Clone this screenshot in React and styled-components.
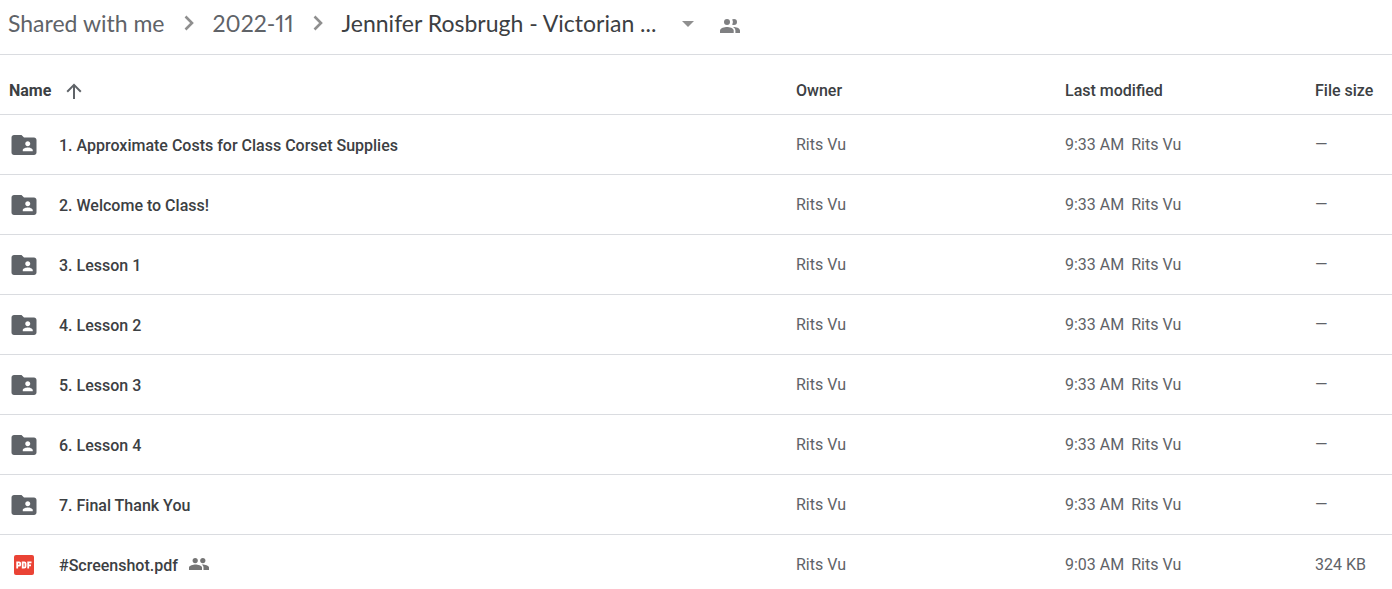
import React, { useState } from "react";
import styled, { createGlobalStyle } from "styled-components";

const GlobalStyle = createGlobalStyle`
  * {
    box-sizing: border-box;
  }
  body {
    margin: 0;
    overflow: hidden;
    background: #fff;
    color: #3c4043;
    font-family: Roboto, "Liberation Sans", sans-serif;
    font-size: 16px;
    line-height: 20px;
  }
  button {
    display: inline-flex;
    align-items: center;
    padding: 0;
    border: 0;
    background: none;
    color: inherit;
    font: inherit;
    cursor: pointer;
  }
`;

const Breadcrumbs = styled.nav`
  display: flex;
  align-items: center;
  height: 55px;
  padding: 0 8px 8px;
  border-bottom: 1px solid #dadce0;
  font-family: Lato, "Liberation Sans", sans-serif;
  font-size: 23px;
  font-variant-numeric: proportional-nums;
  line-height: 28px;
  white-space: nowrap;
`;

const Crumb = styled.a`
  color: ${(props) => (props.$current ? "#3c4043" : "#5f6368")};
  text-decoration: none;
`;

const Chevron = styled.svg`
  width: 24px;
  height: 24px;
  margin: 0 12px;
  fill: none;
  stroke: #8f8f8f;
  stroke-width: 2.6;
`;

const MenuButton = styled.button`
  margin: 0 20px;
`;

const PeopleButton = styled.button`
  padding-top: 6px;
`;

const Icon = styled.svg`
  display: block;
  width: ${(props) => props.$size}px;
  height: ${(props) => props.$height || props.$size}px;
  fill: ${(props) => props.$color || "#5f6368"};
`;

const FileTable = styled.table`
  width: 100%;
  table-layout: fixed;
  border-collapse: separate;
  border-spacing: 0;
`;

const Column = styled.col`
  width: ${(props) => props.$width};
`;

const HeadCell = styled.th`
  height: 60px;
  padding: 12px 0 0;
  border-bottom: 1px solid #dadce0;
  color: #3c4043;
  font-weight: ${(props) => (props.$sorted ? 700 : 500)};
  text-align: left;
`;

const SortButton = styled.button`
  gap: 11px;
  padding-left: 9px;
`;

const Cell = styled.td`
  height: 60px;
  padding: 0;
  border-bottom: 1px solid #dadce0;
  color: #5f6368;
  white-space: nowrap;
`;

const FileRow = styled.div`
  display: flex;
  align-items: center;
  height: 31px;
  padding: 1px 0 0 9px;
  color: #3c4043;
  font-weight: 500;
`;

const FileName = styled.span`
  padding-top: 2px;
`;

const FileIcon = styled.span`
  display: flex;
  justify-content: center;
  width: 30px;
  margin-right: 20px;
`;

const SharedMark = styled.span`
  margin-left: 11px;
  padding-bottom: 2px;
`;

const Editor = styled.span`
  margin-left: 7px;
`;

const PdfBadge = styled.span`
  display: flex;
  align-items: center;
  justify-content: center;
  width: 20px;
  height: 20px;
  border-radius: 2px;
  background: #ea4335;
`;

const files = [
  { name: "1. Approximate Costs for Class Corset Supplies", time: "9:33 AM" },
  { name: "2. Welcome to Class!", time: "9:33 AM" },
  { name: "3. Lesson 1", time: "9:33 AM" },
  { name: "4. Lesson 2", time: "9:33 AM" },
  { name: "5. Lesson 3", time: "9:33 AM" },
  { name: "6. Lesson 4", time: "9:33 AM" },
  { name: "7. Final Thank You", time: "9:33 AM" },
  { name: "#Screenshot.pdf", time: "9:03 AM", size: "324 KB", pdf: true },
];

const Separator = () => (
  <Chevron viewBox="0 0 24 24" aria-hidden="true">
    <path d="M8.5 5.5l6.5 6.5-6.5 6.5" />
  </Chevron>
);

const PeopleIcon = () => (
  <Icon viewBox="0 0 20 14" $size={20} $height={14} $color="#7f8082">
    <circle cx="7" cy="3" r="3" />
    <path d="M14 0a3 3 0 0 1 0 6c-.7 0-1.4-.2-1.9-.6.5-.7.8-1.5.8-2.4s-.3-1.7-.8-2.4C12.6.2 13.3 0 14 0z" />
    <path d="M7 8c-2.3 0-7 1.1-7 3.5V14h13.7v-2.5C13.7 9.1 9.3 8 7 8z" />
    <path d="M13 8c1.5.8 2.4 2 2.4 3.5V14H20v-2.5c0-2.4-4-3.5-7-3.5z" />
  </Icon>
);

const SharedIcon = () => (
  <Icon viewBox="0 0 20 12" $size={20} $height={12} $color="#757575">
    <circle cx="6.2" cy="2.6" r="2.6" />
    <circle cx="13.8" cy="2.6" r="2.6" />
    <path d="M6.5 6.5C4.3 6.5 0 7.5 0 9.6V12h13V9.6c0-2.1-4.3-3.1-6.5-3.1z" />
    <path d="M13.5 6.5l-.9.1c1.1.7 1.9 1.7 1.9 3V12H20V9.6c0-2.1-4.3-3.1-6.5-3.1z" />
  </Icon>
);

const FolderIcon = () => (
  <Icon viewBox="0 0 24 24" $size={30} aria-hidden="true">
    <path d="M20 6h-8l-2-2H4c-1.1 0-1.99.9-1.99 2L2 18c0 1.1.9 2 2 2h16c1.1 0 2-.9 2-2V8c0-1.1-.9-2-2-2zm-5 3c1.1 0 2 .9 2 2s-.9 2-2 2-2-.9-2-2 .9-2 2-2zm4 8h-8v-1c0-1.33 2.67-2 4-2s4 .67 4 2v1z" />
  </Icon>
);

const PdfIcon = () => (
  <PdfBadge>
    <svg width="16" height="8" viewBox="0 0 16 8" aria-hidden="true">
      <g fill="none" stroke="#fff" strokeWidth="1.8">
        <path d="M1.2 7.5V1.3h2a1 1 0 0 1 1 1v1.4a1 1 0 0 1-1 1h-2" />
        <path d="M6.7 1.3h1.6a1.2 1.2 0 0 1 1.2 1.2v3a1.2 1.2 0 0 1-1.2 1.2H6.7z" />
        <path d="M12.2 7.5V1.3h3.3M12.2 4.3h2.8" />
      </g>
    </svg>
  </PdfBadge>
);

const App = () => {
  const [ascending, setAscending] = useState(true);
  const rows = ascending ? files : [...files].reverse();

  return (
    <>
      <GlobalStyle />
      <Breadcrumbs aria-label="Folder path">
        <Crumb href="#shared">Shared with me</Crumb>
        <Separator />
        <Crumb href="#2022-11">2022-11</Crumb>
        <Separator />
        <Crumb href="#folder" $current>
          Jennifer Rosbrugh - Victorian ...
        </Crumb>
        <MenuButton aria-label="Folder actions">
          <Icon viewBox="0 0 24 24" $size={24} $color="#8f8f8f">
            <path d="M6 10h12l-6 6z" />
          </Icon>
        </MenuButton>
        <PeopleButton aria-label="Manage people">
          <PeopleIcon />
        </PeopleButton>
      </Breadcrumbs>
      <FileTable>
        <colgroup>
          <Column />
          <Column $width="269px" />
          <Column $width="250px" />
          <Column $width="77px" />
        </colgroup>
        <thead>
          <tr>
            <HeadCell $sorted>
              <SortButton onClick={() => setAscending(!ascending)}>
                Name
                <Icon viewBox="0 0 24 24" $size={24}>
                  <path d="M4.5 12l1.4 1.4L11 8.3V20h2V8.3l5.1 5.1 1.4-1.4L12 4.5z" />
                </Icon>
              </SortButton>
            </HeadCell>
            <HeadCell>Owner</HeadCell>
            <HeadCell>Last modified</HeadCell>
            <HeadCell>File size</HeadCell>
          </tr>
        </thead>
        <tbody>
          {rows.map((file) => (
            <tr key={file.name}>
              <Cell>
                <FileRow>
                  <FileIcon>{file.pdf ? <PdfIcon /> : <FolderIcon />}</FileIcon>
                  <FileName>{file.name}</FileName>
                  {file.pdf && (
                    <SharedMark>
                      <SharedIcon />
                    </SharedMark>
                  )}
                </FileRow>
              </Cell>
              <Cell>Rits Vu</Cell>
              <Cell>
                {file.time}
                <Editor>Rits Vu</Editor>
              </Cell>
              <Cell>{file.size || "—"}</Cell>
            </tr>
          ))}
        </tbody>
      </FileTable>
    </>
  );
};

export default App;
